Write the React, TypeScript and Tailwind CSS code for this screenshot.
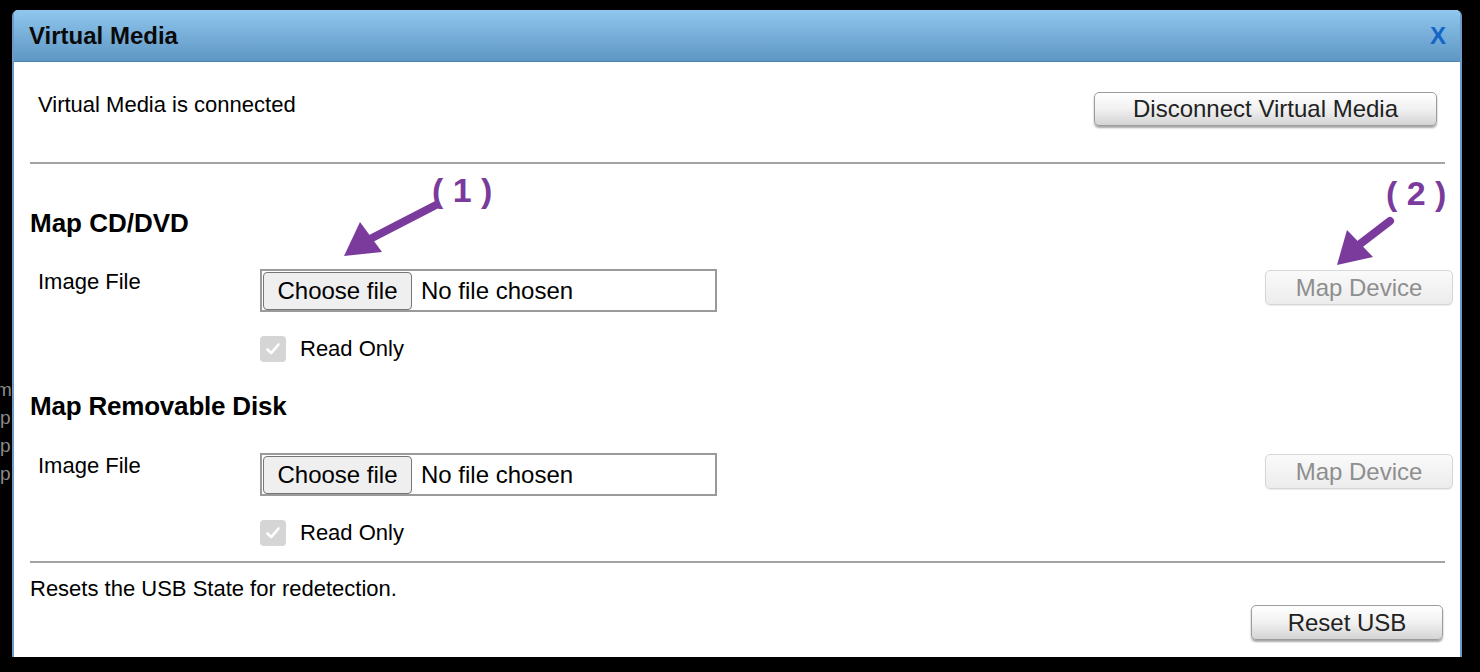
import React from 'react'

const btn =
  'flex items-center justify-center rounded-[5px] border border-[#9c9c9c] bg-gradient-to-b from-[#ffffff] via-[#f1f1f1] to-[#d4d4d4] shadow-[0_2px_2px_rgba(0,0,0,0.35)] text-[#222]'

function FileRow() {
  return (
    <div className="flex items-start">
      <div className="w-[230px] pl-[8px] text-[22px] leading-[26px] text-black">Image File</div>
      <div className="flex h-[43px] w-[457px] items-center border-2 border-[#9a9a9a] bg-white pl-[1px]">
        <div className="flex h-[38px] w-[149px] items-center justify-center rounded-[4px] border border-[#767676] bg-[#efefef] text-[24px] text-black">
          Choose file
        </div>
        <span className="pl-[9px] text-[24px] text-black">No file chosen</span>
      </div>
      <div className="ml-auto -mr-[8px] mt-[1px]">
        <div className="flex h-[35px] w-[188px] items-center justify-center rounded-[5px] border border-[#d6d6d6] bg-gradient-to-b from-[#fafafa] to-[#ececec] text-[24px] text-[#8e8e8e] shadow-[0_1px_1px_rgba(0,0,0,0.08)]">
          Map Device
        </div>
      </div>
    </div>
  )
}

function ReadOnly() {
  return (
    <div className="ml-[230px] flex items-center">
      <div className="flex h-[26px] w-[26px] items-center justify-center rounded-[4px] bg-[#d5d5d5]">
        <svg width="16" height="16" viewBox="0 0 16 16">
          <path d="M2.5 8.5 L6.2 12.2 L13.5 3.5" fill="none" stroke="#fff" strokeWidth="2.6" strokeLinecap="round" strokeLinejoin="round" />
        </svg>
      </div>
      <span className="pl-[14px] text-[22px] leading-[26px] text-black">Read Only</span>
    </div>
  )
}

export default function App() {
  return (
    <div className="relative flex h-[672px] w-[1480px] overflow-hidden bg-black pt-[10px] font-['Liberation_Sans',Arial,sans-serif]">
      <div className="w-[12px] overflow-hidden pt-[366px] text-[19px] leading-[28px] text-[#8a8a8a]">
        <div className="-ml-[4px]">m</div>
        <div>p</div>
        <div>p</div>
        <div>p</div>
      </div>

      <div className="flex h-[647px] w-[1450px] flex-col overflow-hidden rounded-t-[6px] border-x-2 border-[#6b9bc6] bg-white">
        <div className="flex h-[52px] shrink-0 items-center justify-between border-b border-[#4f82ad] bg-gradient-to-b from-[#8fc7ef] to-[#5f97c4] pl-[15px] pr-[14px]">
          <span className="text-[24px] font-bold text-[#0a0a0a]">Virtual Media</span>
          <span className="text-[24px] font-bold text-[#1466c6]">X</span>
        </div>

        <div className="flex flex-col pl-[16px] pr-[15px]">
          <div className="flex items-start justify-between pt-[30px]">
            <div className="pl-[8px] text-[22px] leading-[26px] text-black">Virtual Media is connected</div>
            <div className={`${btn} mr-[8px] h-[34px] w-[343px] text-[24px]`}>Disconnect Virtual Media</div>
          </div>

          <div className="mt-[36px] h-[2px] bg-[#a3a3a3]" />

          <div className="mt-[44px] text-[26px] font-bold leading-[30px] text-black">Map CD/DVD</div>
          <div className="mt-[31px]">
            <FileRow />
          </div>
          <div className="mt-[24px]">
            <ReadOnly />
          </div>

          <div className="mt-[29px] text-[26px] font-bold leading-[30px] tracking-[-0.2px] text-black">Map Removable Disk</div>
          <div className="mt-[32px]">
            <FileRow />
          </div>
          <div className="mt-[24px]">
            <ReadOnly />
          </div>

          <div className="mt-[15px] h-[2px] bg-[#a3a3a3]" />

          <div className="mt-[13px] text-[22px] leading-[26px] text-black">Resets the USB State for redetection.</div>
          <div className="mt-[3px] flex justify-end">
            <div className={`${btn} mr-[2px] h-[35px] w-[192px] text-[24px]`}>Reset USB</div>
          </div>
        </div>
      </div>

      <div className="pointer-events-none absolute left-[432px] top-[171px] text-[34px] font-bold leading-[38px] text-[#7a3b9d]">( 1 )</div>
      <div className="pointer-events-none absolute left-[1386px] top-[174px] text-[34px] font-bold leading-[38px] text-[#7a3b9d]">( 2 )</div>
      <svg className="pointer-events-none absolute left-0 top-0" width="1480" height="672">
        <line x1="436" y1="205" x2="372" y2="238" stroke="#7a3b9d" strokeWidth="8" strokeLinecap="round" />
        <polygon points="344,256 360,222 382,252" fill="#7a3b9d" />
        <line x1="1390" y1="221" x2="1360" y2="244" stroke="#7a3b9d" strokeWidth="8" strokeLinecap="round" />
        <polygon points="1337,265 1347,230 1373,257" fill="#7a3b9d" />
      </svg>
    </div>
  )
}
